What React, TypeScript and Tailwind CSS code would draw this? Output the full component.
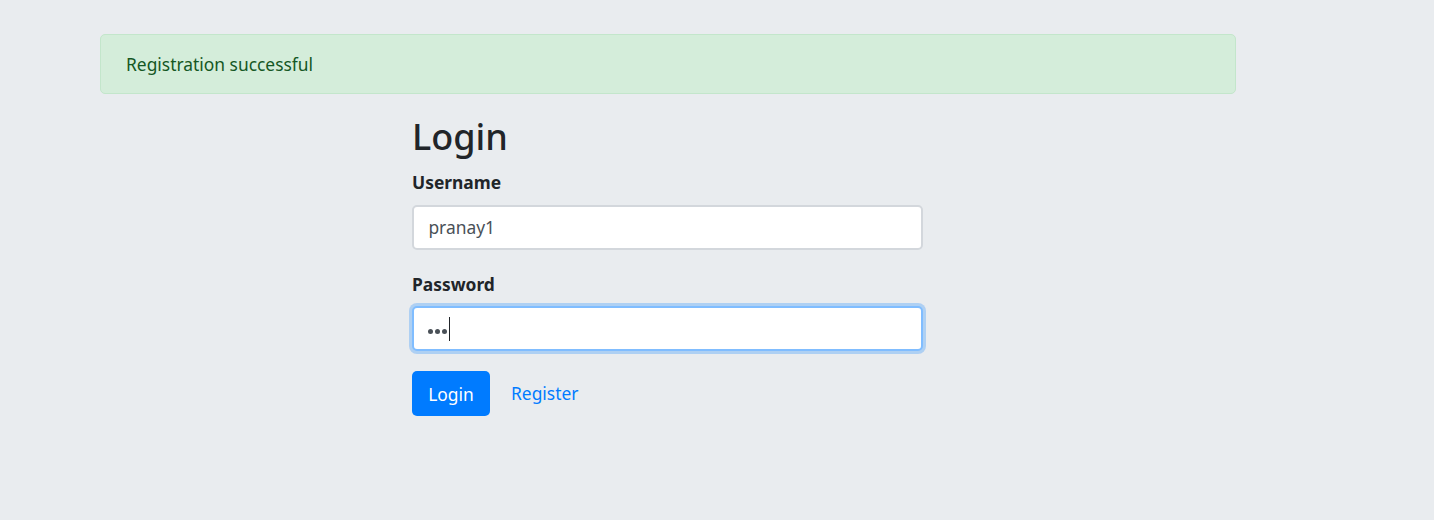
import React from "react";

export default function App() {
  return (
    <div
      className="min-h-[520px] w-full bg-[#e9ecef] text-[#212529]"
      style={{ fontFamily: '"Noto Sans", "Open Sans", Arial, sans-serif' }}
    >
      <div className="ml-[100px] w-[1136px] pt-[34px]">
        <div className="rounded-[5px] border border-[#c3e6cb] bg-[#d4edda] px-[25px] pb-[14px] pt-[15px] text-[17.4px] leading-[28.8px] text-[#155724]">
          Registration successful
        </div>
        <div className="ml-[312px] mt-[20px] w-[511px]">
          <h2 className="mb-[8px] text-[36px] font-medium leading-[46px]">Login</h2>
          <div className="mb-[20px]">
            <label className="mb-[8px] block text-[17.4px] font-bold leading-[28.8px]">Username</label>
            <input
              readOnly
              value="pranay1"
              className="block h-[45px] w-full rounded-[5px] border-2 border-[#d3d7dc] bg-white px-[14.4px] text-[17.4px] text-[#495057] outline-none"
            />
          </div>
          <div className="mb-[20px]">
            <label className="mb-[8px] block text-[17.4px] font-bold leading-[28.8px]">Password</label>
            <div className="flex h-[45px] w-full items-center rounded-[5px] border-2 border-[#80bdff] bg-white px-[14.4px] shadow-[0_0_0_3px_rgba(0,123,255,0.25)]">
              <span className="mt-[6px] flex gap-[2px]">
                <span className="h-[5px] w-[5px] rounded-full bg-[#495057]" />
                <span className="h-[5px] w-[5px] rounded-full bg-[#495057]" />
                <span className="h-[5px] w-[5px] rounded-full bg-[#495057]" />
              </span>
              <span className="ml-[2px] inline-block h-[24px] w-px bg-[#212529]" />
            </div>
          </div>
          <div className="flex items-center">
            <button className="h-[45px] w-[78px] rounded-[5px] bg-[#007bff] text-[17.4px] text-white">Login</button>
            <a className="ml-[21px] text-[17.4px] leading-[45px] text-[#007bff]" href="#">Register</a>
          </div>
        </div>
      </div>
    </div>
  );
}
